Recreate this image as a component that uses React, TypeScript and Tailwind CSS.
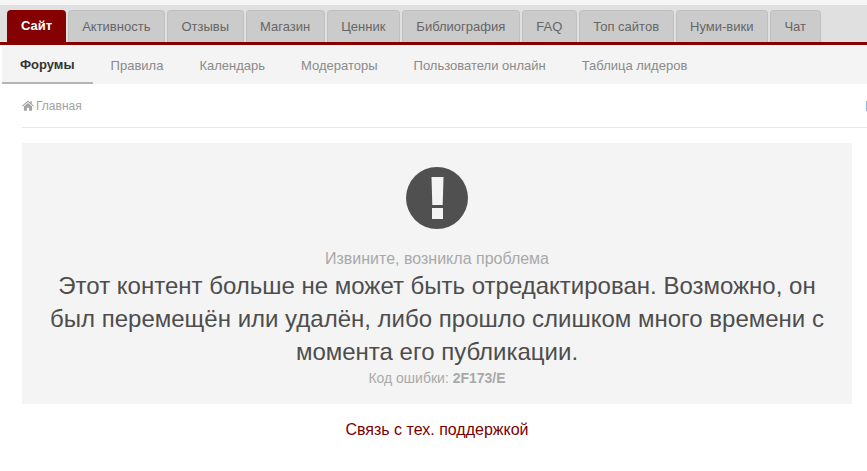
const primaryTabs = ['Активность', 'Отзывы', 'Магазин', 'Ценник', 'Библиография', 'FAQ', 'Топ сайтов', 'Нуми-вики', 'Чат'];
const secondaryTabs = ['Правила', 'Календарь', 'Модераторы', 'Пользователи онлайн', 'Таблица лидеров'];

export default function App() {
  return (
    <div className="h-[471px] overflow-hidden bg-white font-['Liberation_Sans',Arial,sans-serif]">
      <div className="h-[5px] bg-[#f5f5f5]" />
      <nav className="flex h-[37px] items-end gap-[2px] bg-[#e0e0e0] pl-[7px]">
        <a className="flex h-[32px] items-center rounded-t-[4px] bg-[#850000] px-[14px] text-[13px] font-bold text-white">Сайт</a>
        {primaryTabs.map((tab) => (
          <a key={tab} className="flex h-[32px] items-center rounded-t-[4px] border border-b-0 border-[#c0c0c0] bg-[#cbcbcb] pl-[13px] pr-[14px] text-[13px] text-[#666666]">
            {tab}
          </a>
        ))}
      </nav>
      <div className="h-[3px] bg-[#850000]" />
      <div className="ml-[2px] flex h-[39px] bg-[#f4f4f4]">
        <a className="flex items-center border-b-2 border-[#b5b5b5] px-[18px] pt-[2px] text-[13px] font-bold text-[#333333]">Форумы</a>
        {secondaryTabs.map((tab) => (
          <a key={tab} className="flex items-center px-[18px] pt-[2px] text-[13px] text-[#8a8a8a]">
            {tab}
          </a>
        ))}
      </div>
      <div className="pl-[22px]">
        <div className="flex h-[44px] items-center justify-between border-b border-[#e8e8e8]">
          <span className="flex items-center gap-[3px] text-[12px] text-[#a3a3a3]">
            <svg width="12" height="11" viewBox="0 0 22 20" fill="currentColor">
              <path d="M11 1 0 10.5l1.2 1.4L11 3.6l9.8 8.3 1.2-1.4-4-3.4V2h-3v2.7z" />
              <path d="M11 5.5 3.5 11.8V19.5h5.5v-5.5h4v5.5h5.5v-7.7z" />
            </svg>
            <span className="-ml-[1px]">Главная</span>
          </span>
          <span className="h-[10px] w-[1px] bg-[#8fb0e8]" />
        </div>
      </div>
      <div className="ml-[22px] mr-[15px] mt-[15px] flex h-[261px] flex-col items-center bg-[#f4f4f4] px-[24px] pt-[24px] text-center">
        <svg width="62" height="62" viewBox="0 0 62 62" className="shrink-0">
          <circle cx="31" cy="31" r="31" fill="#505050" />
          <path d="M25.5 10h12l-.8 28h-10.4z" fill="#f4f4f4" />
          <rect x="26" y="41" width="11" height="11" fill="#f4f4f4" />
        </svg>
        <p className="mt-[19px] text-[16px] leading-[21px] text-[#a9a9a9]">Извините, возникла проблема</p>
        <p className="text-[24px] leading-[33px] text-[#4d4d4d]">
          Этот контент больше не может быть отредактирован. Возможно, он был перемещён или удалён, либо прошло слишком много времени с момента его публикации.
        </p>
        <p className="mt-[1px] text-[14px] leading-[18px] text-[#a9a9a9]">
          Код ошибки: <strong className="font-bold">2F173/E</strong>
        </p>
      </div>
      <p className="ml-[22px] mr-[15px] mt-[16px] text-center text-[16px] leading-[20px] text-[#7a0000]">Связь с тех. поддержкой</p>
    </div>
  );
}
